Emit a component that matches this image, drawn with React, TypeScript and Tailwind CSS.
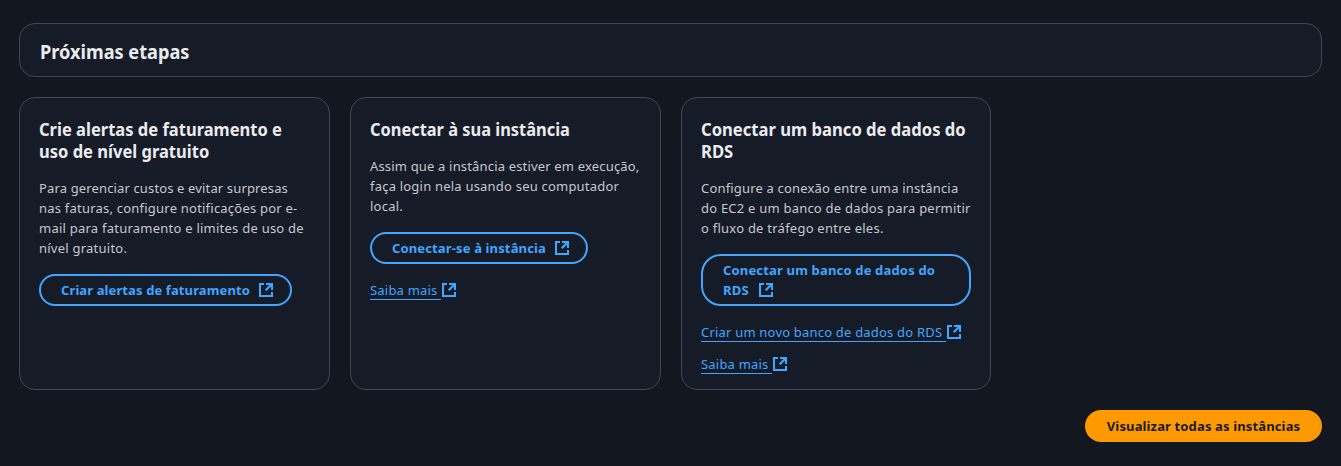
import React from "react";

function ExternalIcon({ className = "" }: { className?: string }) {
  return (
    <svg className={"inline-block size-4 shrink-0 " + className} viewBox="0 0 16 16" fill="none" stroke="currentColor" strokeWidth="2" aria-hidden="true">
      <path d="M6 2H2v12h12v-4" />
      <path d="M8 2h6v6" />
      <path strokeWidth="2.2" d="M7.7 8.3l6-6" />
    </svg>
  );
}

function Line({ className = "", children }: { className?: string; children: React.ReactNode }) {
  return <span className={"block whitespace-nowrap " + className}>{children}</span>;
}

function Card({ className, children }: { className: string; children: React.ReactNode }) {
  return (
    <section className={"flex h-[293px] flex-col items-start rounded-2xl border border-[#424650] bg-[#161c27] px-[19px] pt-5 " + className}>
      {children}
    </section>
  );
}

function Title({ className, children }: { className: string; children: React.ReactNode }) {
  return <h3 className={"origin-left text-[18px] leading-[22px] font-bold text-[#ebebf0] " + className}>{children}</h3>;
}

function Body({ children }: { children: React.ReactNode }) {
  return <p className="mt-4 text-[13px] leading-5 text-[#c6c6cd]">{children}</p>;
}

function MoreLink({ className, children }: { className: string; children: React.ReactNode }) {
  return (
    <a href="#" className={"flex h-5 items-center text-[13px] leading-5 tracking-[0.2px] text-[#42a5ff] " + className}>
      <span className="h-[19px] border-b border-[#42a5ff] pr-1 whitespace-nowrap leading-[19px]">{children}</span>
      <ExternalIcon />
    </a>
  );
}

export default function App() {
  return (
    <main className="flex h-[466px] w-[1341px] flex-col bg-[#13171f] px-[19px] pt-[23px] font-['Noto_Sans',sans-serif]">
      <header className="flex h-[54px] shrink-0 items-center rounded-2xl border border-[#424650] bg-[#161c27] px-5 pt-[3px]">
        <h2 className="origin-left scale-x-[0.908] text-[20px] leading-6 font-bold text-[#ebebf0]"><Line>Próximas etapas</Line></h2>
      </header>
      <div className="mt-5 flex shrink-0">
        <Card className="w-[311px]">
          <Title className="scale-x-[0.918]">
            <Line>Crie alertas de faturamento e</Line>
            <Line>uso de nível gratuito</Line>
          </Title>
          <Body>
            <Line className="tracking-[0.14px]">Para gerenciar custos e evitar surpresas</Line>
            <Line className="tracking-[0.22px]">nas faturas, configure notificações por e-</Line>
            <Line className="tracking-[0.24px]">mail para faturamento e limites de uso de</Line>
            <Line className="tracking-[0.24px]">nível gratuito.</Line>
          </Body>
          <button className="mt-4 flex h-8 w-[253px] items-center rounded-full border-2 border-[#42a5ff] px-5 text-[13px] leading-5 font-bold tracking-[0.11px] text-[#42a5ff]">
            <Line>Criar alertas de faturamento</Line>
            <ExternalIcon className="ml-auto -mr-1" />
          </button>
        </Card>
        <Card className="ml-5 w-[311px]">
          <Title className="scale-x-[0.911]"><Line>Conectar à sua instância</Line></Title>
          <Body>
            <Line className="tracking-[0.17px]">Assim que a instância estiver em execução,</Line>
            <Line className="tracking-[0.21px]">faça login nela usando seu computador</Line>
            <Line className="tracking-[0.24px]">local.</Line>
          </Body>
          <button className="mt-4 flex h-8 w-[218px] items-center rounded-full border-2 border-[#42a5ff] px-5 text-[13px] leading-5 font-bold tracking-[0.14px] text-[#42a5ff]">
            <Line>Conectar-se à instância</Line>
            <ExternalIcon className="ml-auto -mr-1" />
          </button>
          <MoreLink className="mt-4">Saiba mais</MoreLink>
        </Card>
        <Card className="ml-5 w-[310px]">
          <Title className="scale-x-[0.923]">
            <Line>Conectar um banco de dados do</Line>
            <Line>RDS</Line>
          </Title>
          <Body>
            <Line className="tracking-[0.18px]">Configure a conexão entre uma instância</Line>
            <Line className="tracking-[0.22px]">do EC2 e um banco de dados para permitir</Line>
            <Line className="tracking-[0.24px]">o fluxo de tráfego entre eles.</Line>
          </Body>
          <button className="mt-4 h-[52px] w-[270px] rounded-[20px] border-2 border-[#42a5ff] px-5 text-left text-[13px] leading-5 font-bold tracking-[0.17px] text-[#42a5ff]">
            <Line>Conectar um banco de dados do</Line>
            <span className="flex items-center gap-[9px]"><Line>RDS</Line><ExternalIcon /></span>
          </button>
          <MoreLink className="mt-4">Criar um novo banco de dados do RDS</MoreLink>
          <MoreLink className="mt-3">Saiba mais</MoreLink>
        </Card>
      </div>
      <button className="mt-5 flex h-8 w-[237px] shrink-0 items-center justify-center self-end rounded-full bg-[#ff9900] text-[13px] leading-5 font-bold tracking-[0.14px] text-[#161c27]">
        <Line>Visualizar todas as instâncias</Line>
      </button>
    </main>
  );
}
